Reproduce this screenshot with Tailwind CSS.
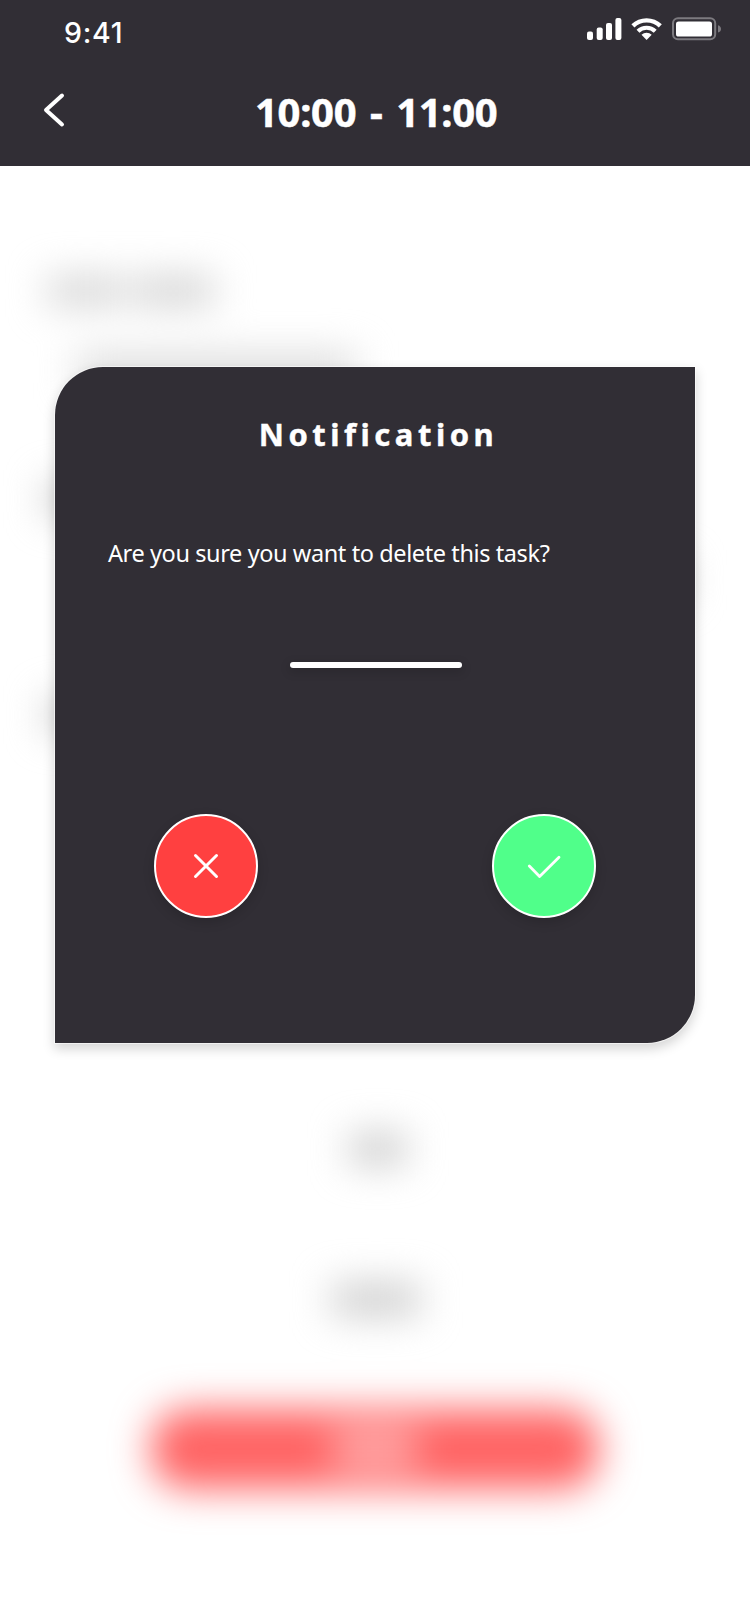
<!DOCTYPE html>
<html lang="en">
<head>
<meta charset="utf-8">
<title>Delete task</title>
<script src="https://cdn.jsdelivr.net/npm/@tailwindcss/browser@4"></script>
</head>
<body class="bg-white text-white font-['Noto_Sans','Open_Sans',sans-serif]">
<div class="relative w-[750px] h-[1624px] overflow-hidden flex flex-col">
  <header class="relative z-10 h-[166px] shrink-0 bg-[#312e35]">
    <div class="flex justify-between pl-[64px] pr-[29px] pt-[15px] h-[68px]">
      <div class="font-['Inter',sans-serif] font-medium text-[28.5px] leading-[36px] tracking-[0.7px]">9:41</div>
      <svg class="w-[136px] h-[28px]" viewBox="585 15 136 28" fill="white">
        <rect x="587" y="31.5" width="6" height="8.5" rx="2"/>
        <rect x="596.7" y="27.5" width="6" height="12.5" rx="2"/>
        <rect x="606" y="23" width="6" height="17" rx="2"/>
        <rect x="615.4" y="18" width="6" height="22" rx="2"/>
        <g fill="none" stroke="white">
          <path d="M632.9 25.9A19.8 19.8 0 0 1 660.3 25.9" stroke-width="4.4"/>
          <path d="M638 31.2A12.5 12.5 0 0 1 655.2 31.2" stroke-width="4.2"/>
        </g>
        <path d="M646.6 40L641.5 34.7A7.4 7.4 0 0 1 651.7 34.7Z"/>
        <rect x="673" y="18.2" width="42.2" height="21" rx="5" fill="none" stroke="#7c7a7f" stroke-width="2"/>
        <rect x="676" y="21.5" width="36" height="15" rx="2.6"/>
        <path d="M718 25.2Q721 26.2 721 28.9T718 32.6Z" fill="#7c7a7f"/>
      </svg>
    </div>
    <div class="flex items-center h-[88px] pl-[42px]">
      <svg class="w-[24px] h-[36px] mb-[4px]" viewBox="0 0 24 36" fill="none" stroke="white" stroke-width="4" stroke-linecap="round" stroke-linejoin="round"><path d="M20 3.5L4 18L20 32.5"/></svg>
      <h1 class="ml-[189px] text-[40px] leading-[54px] font-bold whitespace-nowrap tracking-[-0.3px] [word-spacing:3.6px] [-webkit-text-stroke:0.5px_white]">10:00 - 11:00</h1>
    </div>
  </header>

  <!-- Blurred task form behind the dialog -->
  <main class="flex-1 flex flex-col blur-[19px]" aria-hidden="true">
    <div class="flex gap-[10px] pl-[48px] pt-[111px]">
      <div class="w-[76px] h-[28px] bg-[#d2d2d2]"></div>
      <div class="w-[80px] h-[28px] bg-[#d0d0d0]"></div>
    </div>
    <div class="ml-[76px] mt-[49px] w-[280px] h-[32px] bg-[#dadada]"></div>
    <div class="ml-[46px] mt-[97px] w-[120px] h-[32px] bg-[#cccccc]"></div>
    <div class="ml-[580px] mt-[48px] w-[104px] h-[34px] bg-[#cfcfcf]"></div>
    <div class="ml-[46px] mt-[102px] w-[120px] h-[32px] bg-[#cfcfcf]"></div>
    <div class="self-center mt-[403px] ml-[5px] w-[56px] h-[30px] bg-[#c9c9c9]"></div>
    <div class="self-center mt-[120px] ml-[2px] w-[88px] h-[31px] bg-[#cbcbcb]"></div>
    <div class="self-center mt-[94px] w-[448px] h-[80px] rounded-[36px] bg-[#ff6464] flex items-center justify-center">
      <div class="w-[84px] h-[34px] bg-[#ffb4b4]"></div>
    </div>
  </main>

  <section role="dialog" class="absolute left-[55px] top-[367px] w-[640px] h-[676px] bg-[#312e35] rounded-tl-[48px] rounded-br-[48px] shadow-[0_0_0_1px_rgba(255,255,255,0.6),0_5px_12px_1px_rgba(0,0,0,0.17)] flex flex-col">
    <h2 class="pt-[46px] pl-[7px] text-center text-[31px] leading-[42px] font-bold tracking-[4.5px] [-webkit-text-stroke:0.4px_white]">Notification</h2>
    <p class="mt-[81px] pl-[53px] text-[23.5px] leading-[34px] whitespace-nowrap tracking-[-0.4px]">Are you sure you want to delete this task?</p>
    <div class="self-center ml-[2px] mt-[92px] w-[172px] h-[6px] rounded-[3px] bg-white shadow-[0_3px_10px_2px_rgba(0,0,0,0.12)]"></div>
    <div class="flex justify-between mt-[146px] pl-[99px] pr-[99px]">
      <button aria-label="Cancel" class="w-[104px] h-[104px] rounded-full border-2 border-white bg-[#ff4040] shadow-[0_4px_12px_rgba(0,0,0,0.16)] flex items-center justify-center">
        <svg class="w-[28px] h-[28px]" viewBox="0 0 28 28" fill="none" stroke="white" stroke-width="3" stroke-linecap="round"><path d="M3.5 3.5L24.5 24.5M24.5 3.5L3.5 24.5"/></svg>
      </button>
      <button aria-label="Confirm" class="w-[104px] h-[104px] rounded-full border-2 border-white bg-[#50ff8a] shadow-[0_4px_12px_rgba(0,0,0,0.16)] flex items-center justify-center">
        <svg class="w-[36px] h-[28px]" viewBox="0 0 36 28" fill="none" stroke="white" stroke-width="2.8" stroke-linecap="round" stroke-linejoin="round"><path d="M3.3 14L13.6 24.6L33 5.3"/></svg>
      </button>
    </div>
  </section>
</div>
</body>
</html>
